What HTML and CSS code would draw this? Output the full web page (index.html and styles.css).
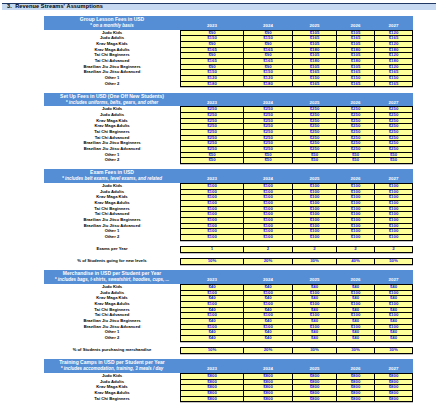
FILE: index.html
```html
<!DOCTYPE html>
<html>
<head>
<meta charset="utf-8">
<link rel="stylesheet" href="styles.css">
</head>
<body>
<div class="sheet">
  <div class="title">3.&nbsp; Revenue Streams' Assumptions</div>

  <section class="section first">
    <div class="head">
      <div class="head-title">Group Lesson Fees in USD</div>
      <div></div>
      <div class="head-sub">* on a monthly basis</div>
      <div class="years"><span>2023</span><span>2024</span><span>2025</span><span>2026</span><span>2027</span></div>
    </div>
    <div class="body">
      <div class="labels">
        <div>Judo Kids</div><div>Judo Adults</div><div>Krav Maga Kids</div><div>Krav Maga Adults</div><div>Tai Chi Beginners</div><div>Tai Chi Advanced</div><div>Brazilian Jiu Jitsu Beginners</div><div>Brazilian Jiu Jitsu Advanced</div><div>Other 1</div><div>Other 2</div>
      </div>
      <div class="cells">
        <span>$90</span><span>$90</span><span>$105</span><span>$105</span><span>$120</span>
        <span>$150</span><span>$150</span><span>$165</span><span>$165</span><span>$165</span>
        <span>$90</span><span>$90</span><span>$105</span><span>$105</span><span>$120</span>
        <span>$165</span><span>$165</span><span>$180</span><span>$180</span><span>$180</span>
        <span>$90</span><span>$90</span><span>$105</span><span>$105</span><span>$120</span>
        <span>$165</span><span>$165</span><span>$180</span><span>$180</span><span>$180</span>
        <span>$90</span><span>$90</span><span>$105</span><span>$105</span><span>$120</span>
        <span>$150</span><span>$150</span><span>$165</span><span>$165</span><span>$165</span>
        <span>$120</span><span>$120</span><span>$150</span><span>$150</span><span>$150</span>
        <span>$180</span><span>$180</span><span>$165</span><span>$165</span><span>$165</span>
      </div>
    </div>
  </section>

  <section class="section">
    <div class="head">
      <div class="head-title">Set Up Fees in USD (One Off New Students)</div>
      <div></div>
      <div class="head-sub">* includes uniforms, belts, gears, and other</div>
      <div class="years"><span>2023</span><span>2024</span><span>2025</span><span>2026</span><span>2027</span></div>
    </div>
    <div class="body">
      <div class="labels">
        <div>Judo Kids</div><div>Judo Adults</div><div>Krav Maga Kids</div><div>Krav Maga Adults</div><div>Tai Chi Beginners</div><div>Tai Chi Advanced</div><div>Brazilian Jiu Jitsu Beginners</div><div>Brazilian Jiu Jitsu Advanced</div><div>Other 1</div><div>Other 2</div>
      </div>
      <div class="cells">
        <span>$250</span><span>$250</span><span>$250</span><span>$250</span><span>$250</span>
        <span>$250</span><span>$250</span><span>$250</span><span>$250</span><span>$250</span>
        <span>$250</span><span>$250</span><span>$250</span><span>$250</span><span>$250</span>
        <span>$250</span><span>$250</span><span>$250</span><span>$250</span><span>$250</span>
        <span>$250</span><span>$250</span><span>$250</span><span>$250</span><span>$250</span>
        <span>$250</span><span>$250</span><span>$250</span><span>$250</span><span>$250</span>
        <span>$250</span><span>$250</span><span>$250</span><span>$250</span><span>$250</span>
        <span>$250</span><span>$250</span><span>$250</span><span>$250</span><span>$250</span>
        <span>$50</span><span>$50</span><span>$50</span><span>$50</span><span>$50</span>
        <span>$50</span><span>$50</span><span>$50</span><span>$50</span><span>$50</span>
      </div>
    </div>
  </section>

  <section class="section">
    <div class="head">
      <div class="head-title">Exam Fees in USD</div>
      <div></div>
      <div class="head-sub">* includes belt exams, level exams, and related</div>
      <div class="years"><span>2023</span><span>2024</span><span>2025</span><span>2026</span><span>2027</span></div>
    </div>
    <div class="body">
      <div class="labels">
        <div>Judo Kids</div><div>Judo Adults</div><div>Krav Maga Kids</div><div>Krav Maga Adults</div><div>Tai Chi Beginners</div><div>Tai Chi Advanced</div><div>Brazilian Jiu Jitsu Beginners</div><div>Brazilian Jiu Jitsu Advanced</div><div>Other 1</div><div>Other 2</div>
      </div>
      <div class="cells">
        <span>$100</span><span>$100</span><span>$100</span><span>$100</span><span>$100</span>
        <span>$100</span><span>$100</span><span>$100</span><span>$100</span><span>$100</span>
        <span>$100</span><span>$100</span><span>$100</span><span>$100</span><span>$100</span>
        <span>$100</span><span>$100</span><span>$100</span><span>$100</span><span>$100</span>
        <span>$100</span><span>$100</span><span>$100</span><span>$100</span><span>$100</span>
        <span>$100</span><span>$100</span><span>$100</span><span>$100</span><span>$100</span>
        <span>$100</span><span>$100</span><span>$100</span><span>$100</span><span>$100</span>
        <span>$100</span><span>$100</span><span>$100</span><span>$100</span><span>$100</span>
        <span>$100</span><span>$100</span><span>$100</span><span>$100</span><span>$100</span>
        <span>$100</span><span>$100</span><span>$100</span><span>$100</span><span>$100</span>
      </div>
    </div>
    <div class="body single">
      <div class="labels"><div>Exams per Year</div></div>
      <div class="cells"><span>1</span><span>2</span><span>2</span><span>2</span><span>2</span></div>
    </div>
    <div class="body single">
      <div class="labels"><div>% of Students going for new levels</div></div>
      <div class="cells"><span>10%</span><span>20%</span><span>30%</span><span>40%</span><span>50%</span></div>
    </div>
  </section>

  <section class="section">
    <div class="head">
      <div class="head-title">Merchandise in USD per Student per Year</div>
      <div></div>
      <div class="head-sub">* includes bags, t-shirts, sweatshirt, hoodies, cups, ...</div>
      <div class="years"><span>2023</span><span>2024</span><span>2025</span><span>2026</span><span>2027</span></div>
    </div>
    <div class="body">
      <div class="labels">
        <div>Judo Kids</div><div>Judo Adults</div><div>Krav Maga Kids</div><div>Krav Maga Adults</div><div>Tai Chi Beginners</div><div>Tai Chi Advanced</div><div>Brazilian Jiu Jitsu Beginners</div><div>Brazilian Jiu Jitsu Advanced</div><div>Other 1</div><div>Other 2</div>
      </div>
      <div class="cells">
        <span>$40</span><span>$40</span><span>$40</span><span>$40</span><span>$40</span>
        <span>$100</span><span>$100</span><span>$100</span><span>$100</span><span>$100</span>
        <span>$40</span><span>$40</span><span>$40</span><span>$40</span><span>$40</span>
        <span>$100</span><span>$100</span><span>$100</span><span>$100</span><span>$100</span>
        <span>$40</span><span>$40</span><span>$40</span><span>$40</span><span>$40</span>
        <span>$100</span><span>$100</span><span>$100</span><span>$100</span><span>$100</span>
        <span>$40</span><span>$40</span><span>$40</span><span>$40</span><span>$40</span>
        <span>$100</span><span>$100</span><span>$100</span><span>$100</span><span>$100</span>
        <span>$40</span><span>$40</span><span>$40</span><span>$40</span><span>$40</span>
        <span>$40</span><span>$40</span><span>$40</span><span>$40</span><span>$40</span>
      </div>
    </div>
    <div class="body single">
      <div class="labels"><div>% of Students purchasing merchandise</div></div>
      <div class="cells"><span>10%</span><span>20%</span><span>30%</span><span>30%</span><span>30%</span></div>
    </div>
  </section>

  <section class="section">
    <div class="head">
      <div class="head-title">Training Camps in USD per Student per Year</div>
      <div></div>
      <div class="head-sub">* includes accomodation, training, 3 meals / day</div>
      <div class="years"><span>2023</span><span>2024</span><span>2025</span><span>2026</span><span>2027</span></div>
    </div>
    <div class="body">
      <div class="labels">
        <div>Judo Kids</div><div>Judo Adults</div><div>Krav Maga Kids</div><div>Krav Maga Adults</div><div>Tai Chi Beginners</div>
      </div>
      <div class="cells">
        <span>$800</span><span>$800</span><span>$800</span><span>$800</span><span>$800</span>
        <span>$800</span><span>$800</span><span>$800</span><span>$800</span><span>$800</span>
        <span>$800</span><span>$800</span><span>$800</span><span>$800</span><span>$800</span>
        <span>$800</span><span>$800</span><span>$800</span><span>$800</span><span>$800</span>
        <span>$800</span><span>$800</span><span>$800</span><span>$800</span><span>$800</span>
      </div>
    </div>
  </section>
</div>
</body>
</html>
```

FILE: styles.css
```css
* {
  box-sizing: border-box;
  margin: 0;
  padding: 0;
}

body {
  margin: 0;
  background: #ffffff;
  font-family: "Liberation Sans", Arial, sans-serif;
  font-weight: bold;
  color: #000000;
}

.sheet {
  width: 436px;
  height: 417px;
  overflow: hidden;
  padding-top: 3px;
}

.title {
  margin-left: 2px;
  height: 7px;
  background: #c6d9f1;
  border-top: 1px solid #1f3864;
  font-size: 5.6px;
  line-height: 5.6px;
  padding-left: 5px;
  letter-spacing: 0.1px;
  white-space: nowrap;
}

.section {
  margin-left: 44px;
  width: 369px;
  margin-top: 5.5px;
}

.section.first {
  margin-top: 6px;
}

.head {
  background: #558ed5;
  color: #ffffff;
  height: 13.67px;
  display: grid;
  grid-template-columns: 136px 233px;
  grid-template-rows: 7px 6.67px;
}

.head-title {
  font-size: 5px;
  line-height: 7.6px;
  text-align: center;
  white-space: nowrap;
}

.head-sub {
  font-size: 4.5px;
  line-height: 6.4px;
  font-style: italic;
  text-align: center;
  white-space: nowrap;
}

.years {
  display: grid;
  grid-template-columns: 62px 48px 43px 37px 37px;
  column-gap: 1px;
  padding: 0 1px;
  font-size: 4.4px;
  line-height: 6.4px;
  text-align: center;
}

.body {
  display: grid;
  grid-template-columns: 136px 233px;
}

.body.single {
  margin-top: 5.5px;
}

.labels {
  display: flex;
  flex-direction: column;
  gap: 1px;
  padding: 1px 0;
}

.labels div {
  height: 4.667px;
  line-height: 4.667px;
  font-size: 4.2px;
  text-align: center;
  white-space: nowrap;
}

.cells {
  display: grid;
  grid-template-columns: 62px 48px 43px 37px 37px;
  grid-auto-rows: 4.667px;
  gap: 1px;
  padding: 1px;
  background: #000000;
  box-shadow: 0 1px 0 #c4c4c4;
}

.cells span {
  background: #ffff99;
  color: #1a1aff;
  font-size: 4.3px;
  line-height: 4.8px;
  text-align: center;
  white-space: nowrap;
}
```
